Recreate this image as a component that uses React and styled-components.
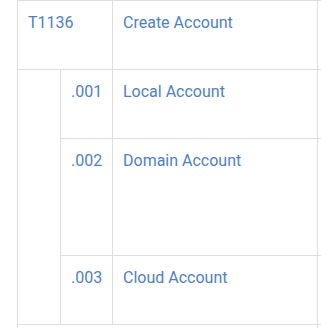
import React from 'react'
import styled, { createGlobalStyle } from 'styled-components'

const GlobalStyle = createGlobalStyle`
  html, body {
    margin: 0;
    padding: 0;
    background: #fff;
    overflow: hidden;
  }
  body {
    font-family: Roboto, "Liberation Sans", Arial, sans-serif;
  }
`

const Matrix = styled.div`
  display: grid;
  grid-template-columns: 43px 52px 205px 120px;
  margin-left: 17px;
  width: max-content;
  border-left: 1px solid #dedede;
  border-top: 1px solid #dedede;
`

const Cell = styled.div`
  box-sizing: border-box;
  height: ${(p) => p.$h}px;
  grid-column: span ${(p) => p.$span || 1};
  grid-row: span ${(p) => p.$rows || 1};
  padding: 10px 10px 8px;
  border-right: 1px solid #dedede;
  border-bottom: 1px solid #dedede;
  font-size: 16px;
  line-height: 24px;
  color: #4f7fc0;
  white-space: nowrap;
`

const subs = [
  { id: '.001', name: 'Local Account', h: 69 },
  { id: '.002', name: 'Domain Account', h: 117 },
  { id: '.003', name: 'Cloud Account', h: 69 },
]

const App = () => {
  const indentHeight = subs.reduce((sum, s) => sum + s.h, 0)

  return (
    <>
      <GlobalStyle />
      <Matrix>
        <Cell $span={2} $h={69}>T1136</Cell>
        <Cell $h={69}>Create Account</Cell>
        <Cell $h={69} />
        <Cell $rows={3} $h={indentHeight} />
        {subs.map((s) => (
          <React.Fragment key={s.id}>
            <Cell $h={s.h}>{s.id}</Cell>
            <Cell $h={s.h}>{s.name}</Cell>
            <Cell $h={s.h} />
          </React.Fragment>
        ))}
        <Cell $span={3} $h={69} />
        <Cell $h={69} />
      </Matrix>
    </>
  )
}

export default App
